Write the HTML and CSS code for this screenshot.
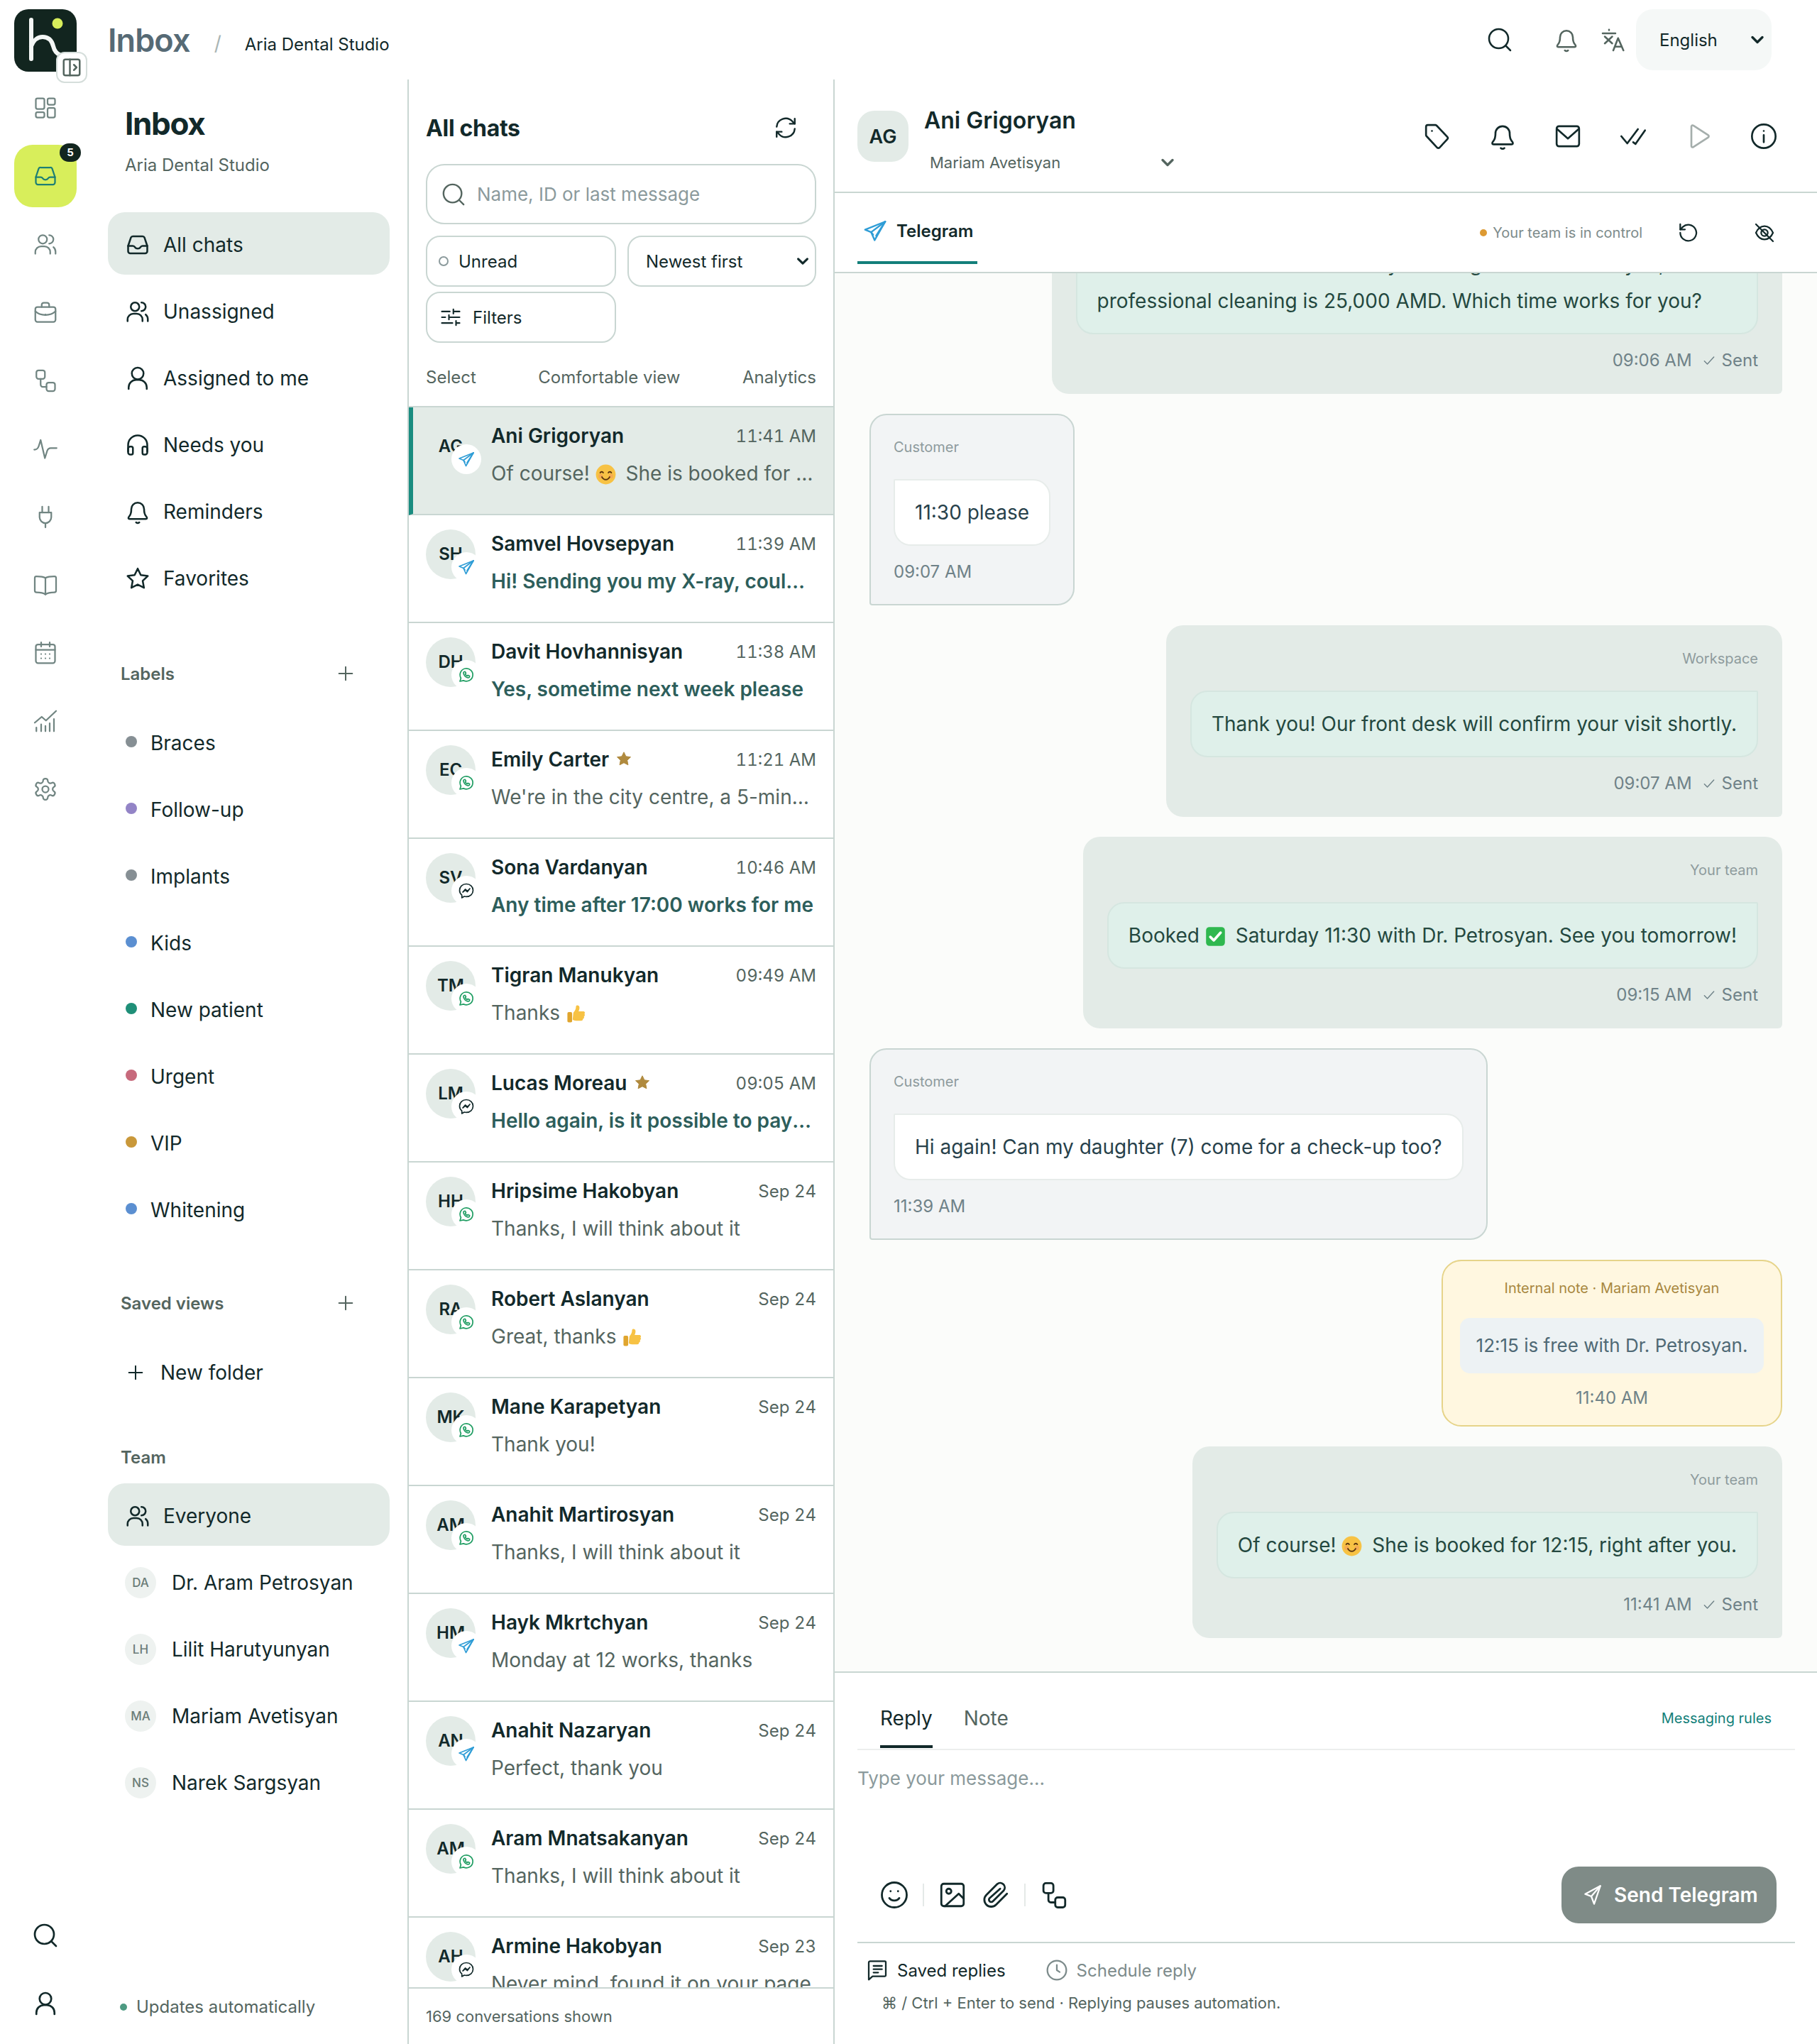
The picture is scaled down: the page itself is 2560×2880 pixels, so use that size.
FILE: index.html
```html
<!DOCTYPE html>
<html lang="en">
<head>
  <meta charset="UTF-8" />
  <title>Inbox - Aria Dental Studio</title>
  <link rel="stylesheet" href="styles.css">
</head>
<body>
  <!-- Icon sprite -->
  <svg class="sprite" xmlns="http://www.w3.org/2000/svg">
    <symbol id="i-inbox" viewBox="0 0 24 24"><path d="M3 13 5.600 5.200A2 2 0 0 1 7.500 4h9a2 2 0 0 1 1.900 1.200L21 13v5a2 2 0 0 1-2 2H5a2 2 0 0 1-2-2z"/><path d="M3 13h4.500c1 0 1.500.5 2 1.300.5.800 1.300 1.200 2.500 1.200s2-.4 2.500-1.200c.5-.8 1-1.300 2-1.300H21"/></symbol>
    <symbol id="i-dash" viewBox="0 0 24 24"><rect x="3" y="3" width="8" height="10" rx="1.500"/><rect x="14" y="3" width="7" height="6" rx="1.500"/><rect x="3" y="16" width="8" height="5" rx="1.500"/><rect x="14" y="12" width="7" height="9" rx="1.500"/></symbol>
    <symbol id="i-users" viewBox="0 0 24 24"><circle cx="9.500" cy="7.500" r="4"/><path d="M2.500 21v-1.500a5.500 5.500 0 0 1 5.500-5.500h3a5.500 5.500 0 0 1 5.500 5.500V21"/><path d="M15.500 3.500a4 4 0 0 1 0 8"/><path d="M19.500 14.800a5.500 5.500 0 0 1 2 4.200v2"/></symbol>
    <symbol id="i-case" viewBox="0 0 24 24"><rect x="2.500" y="7" width="19" height="14" rx="2"/><path d="M8.500 7V5a2 2 0 0 1 2-2h3a2 2 0 0 1 2 2v2"/><path d="M2.500 11c2.500 2.500 5.500 3.500 9.500 3.500s7-1 9.500-3.500"/><path d="M12 14v.5"/></symbol>
    <symbol id="i-flow" viewBox="0 0 24 24"><rect x="3.500" y="2.500" width="8" height="8" rx="2"/><rect x="13" y="14" width="8" height="8" rx="2"/><path d="M7.500 10.500V16a2 2 0 0 0 2 2H13"/></symbol>
    <symbol id="i-pulse" viewBox="0 0 24 24"><path d="M1.500 13c2.500 0 3.500-.8 4.300-3.500L7.500 4l4 17 2.200-7c.6-1.800 1.600-2.500 3.300-2.500h5.500"/></symbol>
    <symbol id="i-plug" viewBox="0 0 24 24"><path d="M9 2.500V8M15 2.500V8"/><path d="M6.500 8h11v4.500a5.500 5.500 0 0 1-11 0z"/><path d="M12 18v4"/></symbol>
    <symbol id="i-book" viewBox="0 0 24 24"><path d="M12 5.500C10 4.300 7.500 4 3.500 4A1.500 1.500 0 0 0 2 5.500v12A1.500 1.500 0 0 0 3.500 19c4 0 6.500.4 8.500 2 2-1.600 4.500-2 8.500-2a1.500 1.500 0 0 0 1.500-1.500v-12A1.500 1.500 0 0 0 20.500 4c-4 0-6.500.3-8.500 1.500z"/><path d="M12 5.500V21"/></symbol>
    <symbol id="i-cal" viewBox="0 0 24 24"><rect x="3" y="4" width="18" height="17.500" rx="2"/><path d="M8 2v4M16 2v4M3 9h18"/><path d="M8 13h.01M12 13h.01M16 13h.01M8 17h.01M12 17h.01M16 17h.01"/></symbol>
    <symbol id="i-chart" viewBox="0 0 24 24"><path d="M2 13.500 8.500 8l4 3.500L22 2.500"/><path d="M3.500 18v3.500M8 15v6.500M12 16.500v5M16 14v7.500M20 10v11.500"/></symbol>
    <symbol id="i-gear" viewBox="0 0 24 24"><path d="M12.200 2h-.4a2 2 0 0 0-2 2v.2a2 2 0 0 1-1 1.700l-.4.300a2 2 0 0 1-2 0l-.2-.1a2 2 0 0 0-2.700.7l-.2.400a2 2 0 0 0 .7 2.700l.2.100a2 2 0 0 1 1 1.700v.5a2 2 0 0 1-1 1.700l-.2.100a2 2 0 0 0-.7 2.700l.2.400a2 2 0 0 0 2.700.7l.2-.1a2 2 0 0 1 2 0l.4.300a2 2 0 0 1 1 1.700v.2a2 2 0 0 0 2 2h.4a2 2 0 0 0 2-2v-.2a2 2 0 0 1 1-1.700l.4-.3a2 2 0 0 1 2 0l.2.100a2 2 0 0 0 2.700-.7l.2-.4a2 2 0 0 0-.7-2.700l-.2-.1a2 2 0 0 1-1-1.700v-.5a2 2 0 0 1 1-1.700l.2-.1a2 2 0 0 0 .7-2.700l-.2-.4a2 2 0 0 0-2.700-.7l-.2.100a2 2 0 0 1-2 0l-.4-.3a2 2 0 0 1-1-1.700V4a2 2 0 0 0-2-2z"/><circle cx="12" cy="12" r="3"/></symbol>
    <symbol id="i-search" viewBox="0 0 24 24"><circle cx="11" cy="11" r="9"/><path d="m18 18 4 4"/></symbol>
    <symbol id="i-user" viewBox="0 0 24 24"><circle cx="12" cy="7.500" r="5.500"/><path d="M3.500 22v-1.500a7 7 0 0 1 7-7h3a7 7 0 0 1 7 7V22"/></symbol>
    <symbol id="i-phones" viewBox="0 0 24 24"><path d="M3 18v-6a9 9 0 0 1 18 0v6"/><path d="M3 15.500a2 2 0 0 1 2-2h1a1.500 1.500 0 0 1 1.500 1.500v4.500A1.500 1.500 0 0 1 6 21H5a2 2 0 0 1-2-2zM21 15.500a2 2 0 0 0-2-2h-1a1.500 1.500 0 0 0-1.500 1.500v4.500A1.500 1.500 0 0 0 18 21h1a2 2 0 0 0 2-2z"/></symbol>
    <symbol id="i-bell" viewBox="0 0 24 24"><path d="M6 9.500a6 6 0 0 1 12 0c0 3.500.7 5.300 1.700 6.500.6.700 1 1.300 1 1.800 0 .6-.5 1-1.200 1H4.500c-.7 0-1.200-.4-1.200-1 0-.5.400-1.100 1-1.800C5.300 14.800 6 13 6 9.500z"/><path d="M10.500 22c.8.700 2.200.7 3 0"/></symbol>
    <symbol id="i-star" viewBox="0 0 24 24"><path d="m12 2.800 2.900 6 6.600.9-4.800 4.600 1.200 6.500-5.900-3.100-5.900 3.100 1.200-6.500-4.800-4.600 6.600-.9z"/></symbol>
    <symbol id="i-plus" viewBox="0 0 24 24"><path d="M12 4v16M4 12h16"/></symbol>
    <symbol id="i-tag" viewBox="0 0 24 24"><path d="M4 2.500h6.500a1.500 1.500 0 0 1 1 .5l9 9.500a1.500 1.500 0 0 1 0 2l-6.500 7a1.500 1.500 0 0 1-2.200 0L3 12a1.500 1.500 0 0 1-.5-1V4A1.500 1.500 0 0 1 4 2.500z"/><path d="M7.500 7.500h.01"/></symbol>
    <symbol id="i-mail" viewBox="0 0 24 24"><rect x="2.500" y="3.500" width="19" height="17" rx="2"/><path d="m3 6 9 8 9-8"/></symbol>
    <symbol id="i-checks" viewBox="0 0 24 24"><path d="m2 12 5 6L16 6"/><path d="m12 17 2 1.500L22 7"/></symbol>
    <symbol id="i-play" viewBox="0 0 24 24"><path d="M6 3.800c0-.9 1-1.400 1.700-.9l12.500 8.100a1.200 1.200 0 0 1 0 2L7.700 21.100C7 21.600 6 21.100 6 20.200z"/></symbol>
    <symbol id="i-info" viewBox="0 0 24 24"><circle cx="12" cy="12" r="10"/><path d="M12 11v6M12 7.500h.01"/></symbol>
    <symbol id="i-sync" viewBox="0 0 24 24"><path d="M3 11a9 9 0 0 1 15.500-5.500L21 8"/><path d="M21 3v5h-5"/><path d="M21 13a9 9 0 0 1-15.500 5.500L3 16"/><path d="M3 21v-5h5"/></symbol>
    <symbol id="i-undo" viewBox="0 0 24 24"><path d="M4 12a8.500 8.500 0 1 0 2.800-6.300L4 8.500"/><path d="M4 3v5.500h5"/></symbol>
    <symbol id="i-eyeoff" viewBox="0 0 24 24"><path d="M3 12c2-4.500 5-7 9-7s7 2.500 9 7c-2 4.500-5 7-9 7s-7-2.500-9-7z"/><circle cx="12" cy="12" r="3.500"/><path d="m3 3 18 18"/></symbol>
    <symbol id="i-lang" viewBox="0 0 24 24"><path d="M2 6h12M8 2.500v.5M4 9l7 6.500M11 9l-7 6.500"/><path d="m12 22 4.500-11.500L21.500 22M13.500 18.500h6"/></symbol>
    <symbol id="i-smile" viewBox="0 0 24 24"><circle cx="12" cy="12" r="10"/><path d="M8 14.500c1 1.500 2.300 2 4 2s3-.5 4-2"/><path d="M9 9h.01M15 9h.01"/></symbol>
    <symbol id="i-image" viewBox="0 0 24 24"><rect x="3" y="3" width="18" height="18" rx="2"/><circle cx="9" cy="9" r="2"/><path d="m21 15-4-4L6 21"/></symbol>
    <symbol id="i-clip" viewBox="0 0 24 24"><path d="m21 11-8.800 8.800a5.500 5.500 0 0 1-7.800-7.800l8.800-8.800a3.700 3.700 0 0 1 5.200 5.200l-8.800 8.700a1.800 1.800 0 0 1-2.600-2.500L15.500 7"/></symbol>
    <symbol id="i-plane" viewBox="0 0 24 24"><path d="M20 2.500 4 11l6.500 2.500 3 8z"/><path d="M20 2.500 10.500 13.500"/></symbol>
    <symbol id="i-tg" viewBox="0 0 24 24"><path d="M22 3 2 11l6 2.500L11.500 21.500z"/><path d="M22 3 8 13.500l2 2.500"/><path d="M22 3 13 17"/></symbol>
    <symbol id="i-wa" viewBox="0 0 24 24"><path d="M3 21l1.400-4.600A9 9 0 1 1 8 19.800z"/><path d="M9 7.500c-.8.400-1.300 1.200-1 2.400.7 2.700 3.300 5.300 6 6 1.200.3 2-.2 2.400-1l.2-1.300-2.400-1.200-1 1.100c-1.200-.5-2.200-1.500-2.800-2.800l1.100-1-1.200-2.400z"/></symbol>
    <symbol id="i-ms" viewBox="0 0 24 24"><path d="M12 2.500c-5.500 0-9.500 4-9.500 9 0 2.800 1.200 5.100 3.200 6.700V22l3.400-2c.9.300 1.900.4 2.900.4 5.500 0 9.500-4 9.500-9s-4-8.900-9.500-8.900z"/><path d="m7 14 3.500-4 3 2.500L17 9l-3.500 4.500-3-2.500z"/></symbol>
    <symbol id="i-notes" viewBox="0 0 24 24"><path d="M4.500 2.500H20a1 1 0 0 1 1 1v14a1 1 0 0 1-1 1H7l-4 3.500V4a1.500 1.500 0 0 1 1.500-1.500z"/><path d="M8 7.500h9M8 11h9M8 14.500h5"/></symbol>
    <symbol id="i-clock" viewBox="0 0 24 24"><circle cx="12" cy="12" r="10"/><path d="M12 6.500V12l3 2"/></symbol>
    <symbol id="i-sliders" viewBox="0 0 24 24"><path d="M2 5.500h9M15 5.500h7M15 3v5M2 12h4M10 12h12M10 9.500v5M2 18.500h12M18 18.500h4M18 16v5"/></symbol>
    <symbol id="i-check" viewBox="0 0 24 24"><path d="m4 13 5 5L20 6"/></symbol>
    <symbol id="i-chev" viewBox="0 0 24 24"><path d="m5 8.500 7 7 7-7"/></symbol>
    <symbol id="i-panel" viewBox="0 0 24 24"><rect x="3" y="3" width="18" height="18" rx="2"/><path d="M10 3v18M14.500 9l3 3-3 3"/></symbol>
    <symbol id="e-smile" viewBox="0 0 24 24"><circle cx="12" cy="12" r="11.500" fill="#f7c244"/><circle cx="6" cy="14" r="2.600" fill="#f39a5b" opacity=".6"/><circle cx="18" cy="14" r="2.600" fill="#f39a5b" opacity=".6"/><path d="M5.500 10c.7-1.500 2.800-1.500 3.500 0M15 10c.7-1.500 2.800-1.500 3.500 0" fill="none" stroke="#5d3710" stroke-width="1.600" stroke-linecap="round"/><path d="M7.500 15c1 2 2.600 3 4.500 3s3.500-1 4.500-3" fill="none" stroke="#5d3710" stroke-width="1.600" stroke-linecap="round"/></symbol>
    <symbol id="e-thumb" viewBox="0 0 24 24"><path d="M9 10.500c2-2 3-4.500 3-7 0-2 3.500-2 4 .5.300 1.700-.3 3.700-1 5h5.500c1.800 0 2.500 2 1.300 3 .9 1 .6 2.500-.5 3 .5 1.200 0 2.500-1.200 2.800.2 1.300-.7 2.200-2 2.200h-6c-2 0-3-.5-4-1.300z" fill="#f7c244"/><rect x="2" y="10" width="5.500" height="12" rx="1.500" fill="#e0a52e"/></symbol>
    <symbol id="e-check" viewBox="0 0 24 24"><rect x="1" y="1" width="22" height="22" rx="4" fill="#2fb84f"/><path d="m6 12.500 4 4 8-9" fill="none" stroke="#fff" stroke-width="3" stroke-linecap="round" stroke-linejoin="round"/></symbol>
  </svg>

  <div class="app">
    <!-- Icon rail -->
    <aside class="rail">
      <div class="logo">
        <svg viewBox="0 0 88 88"><path class="logo-h" d="M24 15v55M24 52c3-8 9-13 16-13 8 0 13 5 15 13 1.500 6 4 10 9 12"/><circle cx="61" cy="20" r="7.500" fill="#d8ee5b"/></svg>
        <span class="logo-toggle"><svg class="ic ic-24"><use href="#i-panel"/></svg></span>
      </div>
      <a class="rail-item"><svg class="ic"><use href="#i-dash"/></svg></a>
      <a class="rail-item active"><svg class="ic"><use href="#i-inbox"/></svg><span class="rail-badge">5</span></a>
      <a class="rail-item"><svg class="ic"><use href="#i-users"/></svg></a>
      <a class="rail-item"><svg class="ic"><use href="#i-case"/></svg></a>
      <a class="rail-item"><svg class="ic"><use href="#i-flow"/></svg></a>
      <a class="rail-item"><svg class="ic"><use href="#i-pulse"/></svg></a>
      <a class="rail-item"><svg class="ic"><use href="#i-plug"/></svg></a>
      <a class="rail-item"><svg class="ic"><use href="#i-book"/></svg></a>
      <a class="rail-item"><svg class="ic"><use href="#i-cal"/></svg></a>
      <a class="rail-item"><svg class="ic"><use href="#i-chart"/></svg></a>
      <a class="rail-item"><svg class="ic"><use href="#i-gear"/></svg></a>
      <a class="rail-item dark push"><svg class="ic"><use href="#i-search"/></svg></a>
      <a class="rail-item dark"><svg class="ic"><use href="#i-user"/></svg></a>
    </aside>

    <div class="main">
      <!-- Top bar -->
      <header class="topbar">
        <span class="top-title">Inbox</span>
        <span class="top-slash">/</span>
        <span class="top-org">Aria Dental Studio</span>
        <div class="top-actions">
          <svg class="ic ic-36 top-search"><use href="#i-search"/></svg>
          <svg class="ic ic-36 top-bell"><use href="#i-bell"/></svg>
          <svg class="ic ic-36 top-lang"><use href="#i-lang"/></svg>
          <div class="lang-pill">English <svg class="ic ic-24 chev"><use href="#i-chev"/></svg></div>
        </div>
      </header>

      <div class="panes">
        <!-- Navigation -->
        <nav class="nav">
          <h1 class="nav-title">Inbox</h1>
          <p class="nav-sub">Aria Dental Studio</p>

          <div class="nav-list">
            <a class="nav-item active"><svg class="ic"><use href="#i-inbox"/></svg>All chats</a>
            <a class="nav-item"><svg class="ic"><use href="#i-users"/></svg>Unassigned</a>
            <a class="nav-item"><svg class="ic"><use href="#i-user"/></svg>Assigned to me</a>
            <a class="nav-item"><svg class="ic"><use href="#i-phones"/></svg>Needs you</a>
            <a class="nav-item"><svg class="ic"><use href="#i-bell"/></svg>Reminders</a>
            <a class="nav-item"><svg class="ic"><use href="#i-star"/></svg>Favorites</a>
          </div>

          <div class="nav-head head-labels">Labels <svg class="ic ic-28"><use href="#i-plus"/></svg></div>
          <div class="nav-list labels">
            <a class="nav-item label"><span class="dot gray"></span>Braces</a>
            <a class="nav-item label"><span class="dot purple"></span>Follow-up</a>
            <a class="nav-item label"><span class="dot gray"></span>Implants</a>
            <a class="nav-item label"><span class="dot blue"></span>Kids</a>
            <a class="nav-item label"><span class="dot green"></span>New patient</a>
            <a class="nav-item label"><span class="dot red"></span>Urgent</a>
            <a class="nav-item label"><span class="dot gold"></span>VIP</a>
            <a class="nav-item label"><span class="dot blue"></span>Whitening</a>
          </div>

          <div class="nav-head head-views">Saved views <svg class="ic ic-28"><use href="#i-plus"/></svg></div>
          <a class="nav-item folder"><svg class="ic ic-28"><use href="#i-plus"/></svg>New folder</a>

          <div class="nav-head head-team">Team</div>
          <div class="nav-list team">
            <a class="nav-item active"><svg class="ic"><use href="#i-users"/></svg>Everyone</a>
            <a class="nav-item member"><span class="mini">DA</span>Dr. Aram Petrosyan</a>
            <a class="nav-item member"><span class="mini">LH</span>Lilit Harutyunyan</a>
            <a class="nav-item member"><span class="mini">MA</span>Mariam Avetisyan</a>
            <a class="nav-item member"><span class="mini">NS</span>Narek Sargsyan</a>
          </div>

          <div class="nav-foot"><span class="foot-dot"></span>Updates automatically</div>
        </nav>

        <!-- Conversation list -->
        <section class="list">
          <div class="list-top">
            <div class="list-title-row">
              <h2 class="list-title">All chats</h2>
              <svg class="ic ic-34"><use href="#i-sync"/></svg>
            </div>
            <div class="search"><svg class="ic ic-34"><use href="#i-search"/></svg><span>Name, ID or last message</span></div>
            <div class="filters">
              <div class="filter unread"><span class="ring"></span>Unread</div>
              <div class="filter sort">Newest first <svg class="ic ic-22 chev"><use href="#i-chev"/></svg></div>
              <div class="filter more"><svg class="ic ic-30"><use href="#i-sliders"/></svg>Filters</div>
            </div>
            <div class="list-links"><span>Select</span><span>Comfortable view</span><span>Analytics</span></div>
          </div>

          <div class="rows">
            <article class="row selected">
              <div class="avatar">AG<span class="badge"><svg class="ic tg"><use href="#i-tg"/></svg></span></div>
              <div class="row-body">
                <div class="row-line"><span class="row-name">Ani Grigoryan</span><time>11:41 AM</time></div>
                <p class="preview">Of course! <svg class="emoji"><use href="#e-smile"/></svg> She is booked for 12:15, right after you.</p>
              </div>
            </article>
            <article class="row">
              <div class="avatar">SH<span class="badge"><svg class="ic tg"><use href="#i-tg"/></svg></span></div>
              <div class="row-body">
                <div class="row-line"><span class="row-name">Samvel Hovsepyan</span><time>11:39 AM</time></div>
                <p class="preview unread-text">Hi! Sending you my X-ray, could you check it?</p>
              </div>
            </article>
            <article class="row">
              <div class="avatar">DH<span class="badge"><svg class="ic wa"><use href="#i-wa"/></svg></span></div>
              <div class="row-body">
                <div class="row-line"><span class="row-name">Davit Hovhannisyan</span><time>11:38 AM</time></div>
                <p class="preview unread-text">Yes, sometime next week please</p>
              </div>
            </article>
            <article class="row">
              <div class="avatar">EC<span class="badge"><svg class="ic wa"><use href="#i-wa"/></svg></span></div>
              <div class="row-body">
                <div class="row-line"><span class="row-name">Emily Carter <svg class="star"><use href="#i-star"/></svg></span><time>11:21 AM</time></div>
                <p class="preview">We're in the city centre, a 5-minute walk from the metro</p>
              </div>
            </article>
            <article class="row">
              <div class="avatar">SV<span class="badge"><svg class="ic ms"><use href="#i-ms"/></svg></span></div>
              <div class="row-body">
                <div class="row-line"><span class="row-name">Sona Vardanyan</span><time>10:46 AM</time></div>
                <p class="preview unread-text">Any time after 17:00 works for me</p>
              </div>
            </article>
            <article class="row">
              <div class="avatar">TM<span class="badge"><svg class="ic wa"><use href="#i-wa"/></svg></span></div>
              <div class="row-body">
                <div class="row-line"><span class="row-name">Tigran Manukyan</span><time>09:49 AM</time></div>
                <p class="preview">Thanks <svg class="emoji"><use href="#e-thumb"/></svg></p>
              </div>
            </article>
            <article class="row">
              <div class="avatar">LM<span class="badge"><svg class="ic ms"><use href="#i-ms"/></svg></span></div>
              <div class="row-body">
                <div class="row-line"><span class="row-name">Lucas Moreau <svg class="star"><use href="#i-star"/></svg></span><time>09:05 AM</time></div>
                <p class="preview unread-text">Hello again, is it possible to pay by card?</p>
              </div>
            </article>
            <article class="row">
              <div class="avatar">HH<span class="badge"><svg class="ic wa"><use href="#i-wa"/></svg></span></div>
              <div class="row-body">
                <div class="row-line"><span class="row-name">Hripsime Hakobyan</span><time>Sep 24</time></div>
                <p class="preview">Thanks, I will think about it</p>
              </div>
            </article>
            <article class="row">
              <div class="avatar">RA<span class="badge"><svg class="ic wa"><use href="#i-wa"/></svg></span></div>
              <div class="row-body">
                <div class="row-line"><span class="row-name">Robert Aslanyan</span><time>Sep 24</time></div>
                <p class="preview">Great, thanks <svg class="emoji"><use href="#e-thumb"/></svg></p>
              </div>
            </article>
            <article class="row">
              <div class="avatar">MK<span class="badge"><svg class="ic wa"><use href="#i-wa"/></svg></span></div>
              <div class="row-body">
                <div class="row-line"><span class="row-name">Mane Karapetyan</span><time>Sep 24</time></div>
                <p class="preview">Thank you!</p>
              </div>
            </article>
            <article class="row">
              <div class="avatar">AM<span class="badge"><svg class="ic wa"><use href="#i-wa"/></svg></span></div>
              <div class="row-body">
                <div class="row-line"><span class="row-name">Anahit Martirosyan</span><time>Sep 24</time></div>
                <p class="preview">Thanks, I will think about it</p>
              </div>
            </article>
            <article class="row">
              <div class="avatar">HM<span class="badge"><svg class="ic tg"><use href="#i-tg"/></svg></span></div>
              <div class="row-body">
                <div class="row-line"><span class="row-name">Hayk Mkrtchyan</span><time>Sep 24</time></div>
                <p class="preview">Monday at 12 works, thanks</p>
              </div>
            </article>
            <article class="row">
              <div class="avatar">AN<span class="badge"><svg class="ic tg"><use href="#i-tg"/></svg></span></div>
              <div class="row-body">
                <div class="row-line"><span class="row-name">Anahit Nazaryan</span><time>Sep 24</time></div>
                <p class="preview">Perfect, thank you</p>
              </div>
            </article>
            <article class="row">
              <div class="avatar">AM<span class="badge"><svg class="ic wa"><use href="#i-wa"/></svg></span></div>
              <div class="row-body">
                <div class="row-line"><span class="row-name">Aram Mnatsakanyan</span><time>Sep 24</time></div>
                <p class="preview">Thanks, I will think about it</p>
              </div>
            </article>
            <article class="row">
              <div class="avatar">AH<span class="badge"><svg class="ic ms"><use href="#i-ms"/></svg></span></div>
              <div class="row-body">
                <div class="row-line"><span class="row-name">Armine Hakobyan</span><time>Sep 23</time></div>
                <p class="preview">Never mind, found it on your page</p>
              </div>
            </article>
          </div>
          <div class="list-foot">169 conversations shown</div>
        </section>

        <!-- Conversation -->
        <section class="chat">
          <header class="chat-head">
            <div class="chat-avatar">AG</div>
            <div class="chat-who">
              <div class="chat-name">Ani Grigoryan</div>
              <div class="chat-owner">Mariam Avetisyan <svg class="ic ic-24 chev"><use href="#i-chev"/></svg></div>
            </div>
            <div class="chat-actions">
              <svg class="ic ic-40"><use href="#i-tag"/></svg>
              <svg class="ic ic-40"><use href="#i-bell"/></svg>
              <svg class="ic ic-40"><use href="#i-mail"/></svg>
              <svg class="ic ic-40"><use href="#i-checks"/></svg>
              <svg class="ic ic-40 muted"><use href="#i-play"/></svg>
              <svg class="ic ic-40"><use href="#i-info"/></svg>
            </div>
          </header>

          <div class="channel-bar">
            <div class="channel-tab"><svg class="ic tg ic-34"><use href="#i-tg"/></svg>Telegram</div>
            <div class="control"><span class="control-dot"></span>Your team is in control</div>
            <svg class="ic ic-32 undo"><use href="#i-undo"/></svg>
            <svg class="ic ic-32 eye"><use href="#i-eyeoff"/></svg>
          </div>

          <div class="messages">
            <div class="msg out">
              <div class="msg-text long">We have free slots this Saturday morning with Dr. Petrosyan, and our<br>professional cleaning is 25,000 AMD. Which time works for you?</div>
              <div class="msg-meta">09:06 AM <svg class="ic ic-20"><use href="#i-check"/></svg> Sent</div>
            </div>
            <div class="msg in">
              <div class="msg-from">Customer</div>
              <div class="msg-text">11:30 please</div>
              <div class="msg-meta">09:07 AM</div>
            </div>
            <div class="msg out">
              <div class="msg-from">Workspace</div>
              <div class="msg-text">Thank you! Our front desk will confirm your visit shortly.</div>
              <div class="msg-meta">09:07 AM <svg class="ic ic-20"><use href="#i-check"/></svg> Sent</div>
            </div>
            <div class="msg out">
              <div class="msg-from">Your team</div>
              <div class="msg-text">Booked <svg class="emoji"><use href="#e-check"/></svg> Saturday 11:30 with Dr. Petrosyan. See you tomorrow!</div>
              <div class="msg-meta">09:15 AM <svg class="ic ic-20"><use href="#i-check"/></svg> Sent</div>
            </div>
            <div class="msg in">
              <div class="msg-from">Customer</div>
              <div class="msg-text">Hi again! Can my daughter (7) come for a check-up too?</div>
              <div class="msg-meta">11:39 AM</div>
            </div>
            <div class="msg note">
              <div class="msg-from">Internal note · Mariam Avetisyan</div>
              <div class="msg-text">12:15 is free with Dr. Petrosyan.</div>
              <div class="msg-meta">11:40 AM</div>
            </div>
            <div class="msg out">
              <div class="msg-from">Your team</div>
              <div class="msg-text">Of course! <svg class="emoji"><use href="#e-smile"/></svg> She is booked for 12:15, right after you.</div>
              <div class="msg-meta">11:41 AM <svg class="ic ic-20"><use href="#i-check"/></svg> Sent</div>
            </div>
          </div>

          <footer class="composer">
            <div class="comp-tabs">
              <span class="comp-tab active">Reply</span>
              <span class="comp-tab">Note</span>
              <a class="comp-rules">Messaging rules</a>
            </div>
            <div class="comp-input">Type your message...</div>
            <div class="comp-tools">
              <svg class="ic ic-42"><use href="#i-smile"/></svg>
              <span class="tool-sep"></span>
              <svg class="ic ic-42"><use href="#i-image"/></svg>
              <svg class="ic ic-42"><use href="#i-clip"/></svg>
              <span class="tool-sep"></span>
              <svg class="ic ic-42"><use href="#i-flow"/></svg>
              <button class="send"><svg class="ic ic-32"><use href="#i-plane"/></svg>Send Telegram</button>
            </div>
            <div class="comp-links">
              <span class="comp-link"><svg class="ic ic-32"><use href="#i-notes"/></svg>Saved replies</span>
              <span class="comp-link off"><svg class="ic ic-32"><use href="#i-clock"/></svg>Schedule reply</span>
            </div>
            <div class="comp-hint">⌘ / Ctrl + Enter to send · Replying pauses automation.</div>
          </footer>
        </section>
      </div>
    </div>
  </div>
</body>
</html>
```
FILE: styles.css
```css
* {
  box-sizing: border-box;
}
body {
  margin: 0;
  font-family: Inter, "Liberation Sans", sans-serif;
  color: #12292a;
  background: #fff;
}
h1, h2, p {
  margin: 0;
}
.sprite {
  display: none;
}
.app {
  display: flex;
  width: 2560px;
  height: 2880px;
  overflow: hidden;
}

/* Shared icon styling */
.ic {
  width: 36px;
  height: 36px;
  flex: none;
  fill: none;
  stroke: currentColor;
  stroke-width: 1.7;
  stroke-linecap: round;
  stroke-linejoin: round;
}
.ic-20 { width: 20px; height: 20px; }
.ic-22 { width: 22px; height: 22px; }
.ic-24 { width: 24px; height: 24px; }
.ic-28 { width: 28px; height: 28px; }
.ic-30 { width: 30px; height: 30px; }
.ic-32 { width: 32px; height: 32px; }
.ic-34 { width: 34px; height: 34px; }
.ic-36 { width: 36px; height: 36px; }
.ic-40 { width: 40px; height: 40px; stroke-width: 1.6; }
.ic-42 { width: 42px; height: 42px; stroke-width: 1.6; }
.chev {
  stroke-width: 3.4;
}
.emoji {
  width: 29px;
  height: 29px;
  margin-right: 6px;
  vertical-align: -6px;
}
.tg { color: #2f9dd6; }
.wa { color: #1f9d62; }
.ms { color: #12292a; }

/* Icon rail */
.rail {
  width: 128px;
  flex: none;
  display: flex;
  flex-direction: column;
  align-items: center;
  gap: 8px;
  padding: 13px 0;
}
.logo {
  position: relative;
  width: 88px;
  height: 88px;
  margin-bottom: -1px;
  background: #12251f;
  border-radius: 20px;
}
.logo svg {
  display: block;
}
.logo-h {
  fill: none;
  stroke: #f4f7f5;
  stroke-width: 6;
  stroke-linecap: round;
}
.logo-toggle {
  position: absolute;
  left: 59px;
  top: 60px;
  width: 44px;
  height: 44px;
  display: flex;
  align-items: center;
  justify-content: center;
  background: #fff;
  border: 2px solid #d5dedb;
  border-radius: 12px;
  color: #54655f;
}
.logo-toggle .ic {
  width: 30px;
  height: 30px;
  stroke-width: 2;
}
.rail-item {
  position: relative;
  width: 88px;
  height: 88px;
  flex: none;
  display: flex;
  align-items: center;
  justify-content: center;
  border-radius: 26px;
  color: #718582;
}
.rail-item .ic {
  stroke-width: 1.5;
}
.rail-item.active {
  background: #d8ee5b;
  color: #1d7f74;
}
.rail-item.dark {
  color: #12292a;
}
.rail-item.dark .ic {
  stroke-width: 1.8;
}
.rail-item.push {
  margin-top: auto;
}
.rail-badge {
  position: absolute;
  right: -6px;
  top: -2px;
  width: 30px;
  height: 26px;
  border-radius: 13px;
  background: #12251f;
  color: #fff;
  font-size: 15px;
  font-weight: 700;
  line-height: 26px;
  text-align: center;
}

/* Top bar */
.main {
  flex: 1;
  min-width: 0;
  display: flex;
  flex-direction: column;
}
.topbar {
  height: 112px;
  flex: none;
  display: flex;
  align-items: center;
  padding: 0 64px 0 24px;
}
.top-title {
  font-size: 45px;
  font-weight: 600;
  letter-spacing: -0.02em;
  color: #566a75;
}
.top-slash {
  margin-left: 34px;
  font-size: 28px;
  color: #a9b5b4;
  padding-top: 10px;
}
.top-org {
  margin-left: 33px;
  padding-top: 12px;
  font-size: 24px;
}
.top-actions {
  margin-left: auto;
  display: flex;
  align-items: center;
}
.top-bell {
  margin-left: 58px;
  color: #54655f;
}
.top-lang {
  margin-left: 30px;
  color: #54655f;
}
.lang-pill {
  margin-left: 14px;
  width: 191px;
  height: 86px;
  display: flex;
  align-items: center;
  justify-content: space-between;
  padding: 0 8px 0 33px;
  background: #f5f8f7;
  border-radius: 24px;
  font-size: 24px;
}

.panes {
  flex: 1;
  min-height: 0;
  display: flex;
}

/* Navigation */
.nav {
  width: 448px;
  flex: none;
  display: flex;
  flex-direction: column;
  padding: 35px 25px 34px 24px;
  border-right: 2px solid #c9d6d2;
}
.nav-title {
  padding-left: 24px;
  font-size: 44px;
  line-height: 54px;
  font-weight: 700;
  letter-spacing: -0.03em;
}
.nav-sub {
  margin: 14px 0 48px;
  padding-left: 24px;
  font-size: 24px;
  line-height: 36px;
  color: #54655f;
}
.nav-list {
  display: flex;
  flex-direction: column;
  gap: 6px;
}
.nav-item {
  height: 88px;
  flex: none;
  display: flex;
  align-items: center;
  gap: 18px;
  padding: 4px 0 0 24px;
  border-radius: 24px;
  font-size: 28px;
}
.nav-item.active {
  background: #e3ebe7;
}
.nav-head {
  display: flex;
  align-items: center;
  justify-content: space-between;
  height: 40px;
  padding: 0 48px 0 18px;
  font-size: 24px;
  font-weight: 600;
  color: #54655f;
}
.head-labels { margin-top: 72px; }
.labels { margin-top: 32px; }
.head-views { margin-top: 69px; }
.head-team { margin-top: 57px; }
.team { margin-top: 17px; }
.nav-item.folder {
  margin-top: 32px;
  padding-left: 25px;
  gap: 21px;
}
.nav-item.member {
  gap: 22px;
}
.nav-item.label {
  gap: 19px;
}
.dot {
  width: 16px;
  height: 16px;
  margin-left: 1px;
  margin-top: -4px;
  border-radius: 50%;
}
.dot.gray { background: #868f94; }
.dot.purple { background: #9384c6; }
.dot.blue { background: #5b8fd1; }
.dot.green { background: #1f8f78; }
.dot.red { background: #c76a7c; }
.dot.gold { background: #c9983a; }
.mini {
  width: 44px;
  height: 44px;
  flex: none;
  display: flex;
  align-items: center;
  justify-content: center;
  border-radius: 50%;
  background: #eef2f0;
  color: #6b7c78;
  font-size: 17px;
  font-weight: 500;
}
.nav-foot {
  margin-top: auto;
  display: flex;
  align-items: center;
  gap: 13px;
  padding-left: 17px;
  font-size: 24px;
  line-height: 36px;
  color: #54655f;
}
.foot-dot {
  width: 10px;
  height: 10px;
  border-radius: 50%;
  background: #4d9a82;
}

/* Conversation list */
.list {
  width: 600px;
  flex: none;
  display: flex;
  flex-direction: column;
  border-right: 2px solid #c9d6d2;
}
.list-top {
  flex: none;
  padding: 0 24px;
}
.list-title-row {
  display: flex;
  align-items: center;
  justify-content: space-between;
  height: 44px;
  margin-top: 46px;
  padding-right: 26px;
}
.list-title {
  font-size: 32px;
  font-weight: 700;
  letter-spacing: -0.01em;
}
.search {
  display: flex;
  align-items: center;
  gap: 16px;
  height: 85px;
  margin-top: 29px;
  padding-left: 20px;
  border: 2px solid #c9d6d2;
  border-radius: 26px;
  font-size: 26px;
  color: #8b9a9c;
}
.search .ic {
  color: #54655f;
}
.filters {
  display: grid;
  grid-template-columns: 268px 266px;
  justify-content: space-between;
  gap: 7px 16px;
  margin-top: 16px;
}
.filter {
  display: flex;
  align-items: center;
  height: 72px;
  border: 2px solid #c9d6d2;
  border-radius: 20px;
  font-size: 24px;
}
.filter.unread {
  gap: 14px;
  padding-left: 16px;
}
.ring {
  width: 14px;
  height: 14px;
  border: 2px solid #8b9a9c;
  border-radius: 50%;
}
.filter.sort {
  justify-content: space-between;
  padding: 0 6px 0 24px;
}
.filter.more {
  gap: 16px;
  padding-left: 18px;
}
.list-links {
  display: flex;
  justify-content: space-between;
  align-items: center;
  height: 40px;
  margin-top: 28px;
  font-size: 24px;
  color: #54655f;
}
.rows {
  flex: 1;
  min-height: 0;
  margin-top: 21px;
  overflow: hidden;
  border-top: 2px solid #c9d6d2;
}
.row {
  display: flex;
  gap: 22px;
  height: 152px;
  padding: 20px 24px 0;
  border-bottom: 2px solid #c9d6d2;
}
.row.selected {
  padding-left: 18px;
  border-left: 6px solid #1a8c80;
  background: #e3ebe7;
}
.avatar {
  position: relative;
  width: 70px;
  height: 70px;
  flex: none;
  display: flex;
  align-items: center;
  justify-content: center;
  padding-bottom: 2px;
  border-radius: 50%;
  background: #e3ebe7;
  font-size: 24px;
  font-weight: 600;
}
.badge {
  position: absolute;
  left: 36px;
  top: 32px;
  width: 42px;
  height: 42px;
  display: flex;
  align-items: center;
  justify-content: center;
  border-radius: 50%;
  background: #fff;
}
.badge .ic {
  width: 24px;
  height: 24px;
}
.row-body {
  flex: 1;
  min-width: 0;
}
.row-line {
  display: flex;
  align-items: center;
  justify-content: space-between;
  height: 42px;
  margin-top: -1px;
}
.row-name {
  font-size: 28px;
  font-weight: 600;
}
.star {
  width: 24px;
  height: 24px;
  fill: #b08a3e;
  stroke: #b08a3e;
  vertical-align: -1px;
  margin-left: 2px;
}
time {
  font-size: 24px;
  font-variant-numeric: tabular-nums;
  color: #54655f;
}
.preview {
  margin-top: 12px;
  font-size: 28px;
  line-height: 40px;
  color: #54655f;
  white-space: nowrap;
  overflow: hidden;
  text-overflow: ellipsis;
}
.preview.unread-text {
  font-weight: 600;
  color: #2d5e5b;
}
.list-foot {
  flex: none;
  height: 80px;
  display: flex;
  align-items: center;
  padding-left: 24px;
  background: #fff;
  border-top: 2px solid #c9d6d2;
  font-size: 22px;
  color: #54655f;
}

/* Conversation */
.chat {
  flex: 1;
  min-width: 0;
  display: flex;
  flex-direction: column;
}
.chat-head {
  height: 160px;
  flex: none;
  display: flex;
  padding: 44px 0 0 32px;
  border-bottom: 2px solid #c9d6d2;
}
.chat-avatar {
  width: 72px;
  height: 72px;
  display: flex;
  align-items: center;
  justify-content: center;
  border-radius: 24px;
  background: #e3ebe7;
  font-size: 27px;
  font-weight: 600;
}
.chat-who {
  margin-left: 22px;
  margin-top: -6px;
}
.chat-name {
  font-size: 32px;
  font-weight: 600;
  line-height: 40px;
}
.chat-owner {
  display: flex;
  align-items: center;
  justify-content: space-between;
  width: 355px;
  margin-top: 24px;
  padding-left: 8px;
  font-size: 22px;
  line-height: 30px;
  color: #54655f;
}
.chat-actions {
  margin-left: auto;
  display: flex;
  align-items: center;
  gap: 52px;
  height: 72px;
  padding-right: 55px;
}
.muted {
  color: #a5aeac;
}
.channel-bar {
  height: 113px;
  flex: none;
  display: flex;
  align-items: center;
  padding: 0 58px 0 32px;
  border-bottom: 2px solid #c9d6d2;
}
.channel-tab {
  align-self: flex-start;
  display: flex;
  align-items: center;
  gap: 13px;
  width: 169px;
  height: 100px;
  padding: 10px 0 0 8px;
  border-bottom: 4px solid #137f7a;
  font-size: 24px;
  font-weight: 600;
}
.control {
  margin-left: auto;
  display: flex;
  align-items: center;
  gap: 8px;
  font-size: 20px;
  color: #7d8b8b;
}
.control-dot {
  width: 10px;
  height: 10px;
  border-radius: 50%;
  background: #dd9a33;
}
.undo {
  margin-left: 48px;
}
.eye {
  margin-left: 76px;
}

/* Messages */
.messages {
  flex: 1;
  min-height: 0;
  overflow: hidden;
  display: flex;
  flex-direction: column;
  justify-content: flex-end;
  gap: 28px;
  padding: 0 49px 47px;
  background: #fbfcfa;
}
.msg {
  flex: none;
  padding: 33px 34px 29px;
}
.msg-from {
  margin-bottom: 31px;
  font-size: 20px;
  line-height: 28px;
  color: #8e9b9d;
}
.msg-text {
  padding: 22px 28px;
  font-size: 28px;
  line-height: 46px;
}
.msg-text.long {
  padding: 22px 21px 19px 28px;
  line-height: 52px;
}
.msg-meta {
  display: flex;
  align-items: center;
  gap: 8px;
  margin-top: 19px;
  font-size: 24px;
  line-height: 36px;
  color: #6f8288;
}
.msg.out {
  align-self: flex-end;
  background: #e3ebe7;
  border-radius: 24px 24px 6px 24px;
  text-align: right;
}
.msg.out .msg-text {
  background: #dff0ea;
  border: 2px solid #d5e6e0;
  border-radius: 24px 2px 24px 24px;
  color: #24483f;
  text-align: left;
}
.msg.out .msg-meta {
  justify-content: flex-end;
}
.msg.out .msg-meta .ic {
  margin-left: 6px;
}
.msg.in {
  align-self: flex-start;
  padding: 31px 32px 27px;
  background: #f2f4f5;
  border: 2px solid #c9d6d2;
  border-radius: 24px 24px 24px 4px;
}
.msg.in .msg-text {
  background: #fff;
  border: 2px solid #e7ecea;
  border-radius: 2px 24px 24px 24px;
  color: #27414b;
}
.msg.note {
  align-self: flex-end;
  width: 480px;
  padding: 24px 24px 20px;
  background: #fff7e0;
  border: 2px solid #e6d48a;
  border-radius: 28px;
  text-align: center;
}
.msg.note .msg-from {
  margin-bottom: 28px;
  color: #a8873f;
}
.msg.note .msg-text {
  padding: 16px 10px;
  background: #edf2f4;
  font-size: 26px;
  color: #4f6975;
  border-radius: 14px;
}
.msg.note .msg-meta {
  justify-content: center;
  margin-top: 17px;
}

/* Composer */
.composer {
  height: 525px;
  flex: none;
  padding: 0 31px 0 32px;
  border-top: 2px solid #c9d6d2;
}
.comp-tabs {
  display: flex;
  align-items: center;
  gap: 44px;
  height: 109px;
  padding: 20px 33px 0 32px;
  border-bottom: 2px solid #eceeed;
}
.comp-tab {
  position: relative;
  font-size: 28px;
  color: #54655f;
}
.comp-tab.active {
  color: #12292a;
}
.comp-tab.active::after {
  content: "";
  position: absolute;
  left: 0;
  right: 0;
  bottom: -25px;
  height: 4px;
  background: #12292a;
}
.comp-rules {
  margin-left: auto;
  font-size: 20px;
  color: #137f7a;
}
.comp-input {
  margin-top: 22px;
  font-size: 26px;
  line-height: 36px;
  color: #8b9a9c;
}
.comp-tools {
  display: flex;
  align-items: center;
  gap: 19px;
  height: 80px;
  margin-top: 106px;
  padding: 0 26px 0 31px;
}
.tool-sep {
  width: 2px;
  height: 32px;
  background: #e4e9e7;
}
.send {
  margin-left: auto;
  display: flex;
  align-items: center;
  gap: 14px;
  width: 303px;
  height: 80px;
  padding: 0 0 0 28px;
  border: none;
  border-radius: 24px;
  background: #7f8b87;
  color: #fff;
  font-family: inherit;
  font-size: 28px;
  font-weight: 600;
}
.comp-links {
  display: flex;
  gap: 56px;
  margin-top: 26px;
  padding: 22px 0 0 12px;
  border-top: 2px solid #c9d6d2;
}
.comp-link {
  display: flex;
  align-items: center;
  gap: 12px;
  font-size: 24px;
}
.comp-link.off {
  color: #7d8b8b;
}
.comp-hint {
  margin-top: 17px;
  padding-left: 34px;
  font-size: 22px;
  color: #54655f;
}
```
